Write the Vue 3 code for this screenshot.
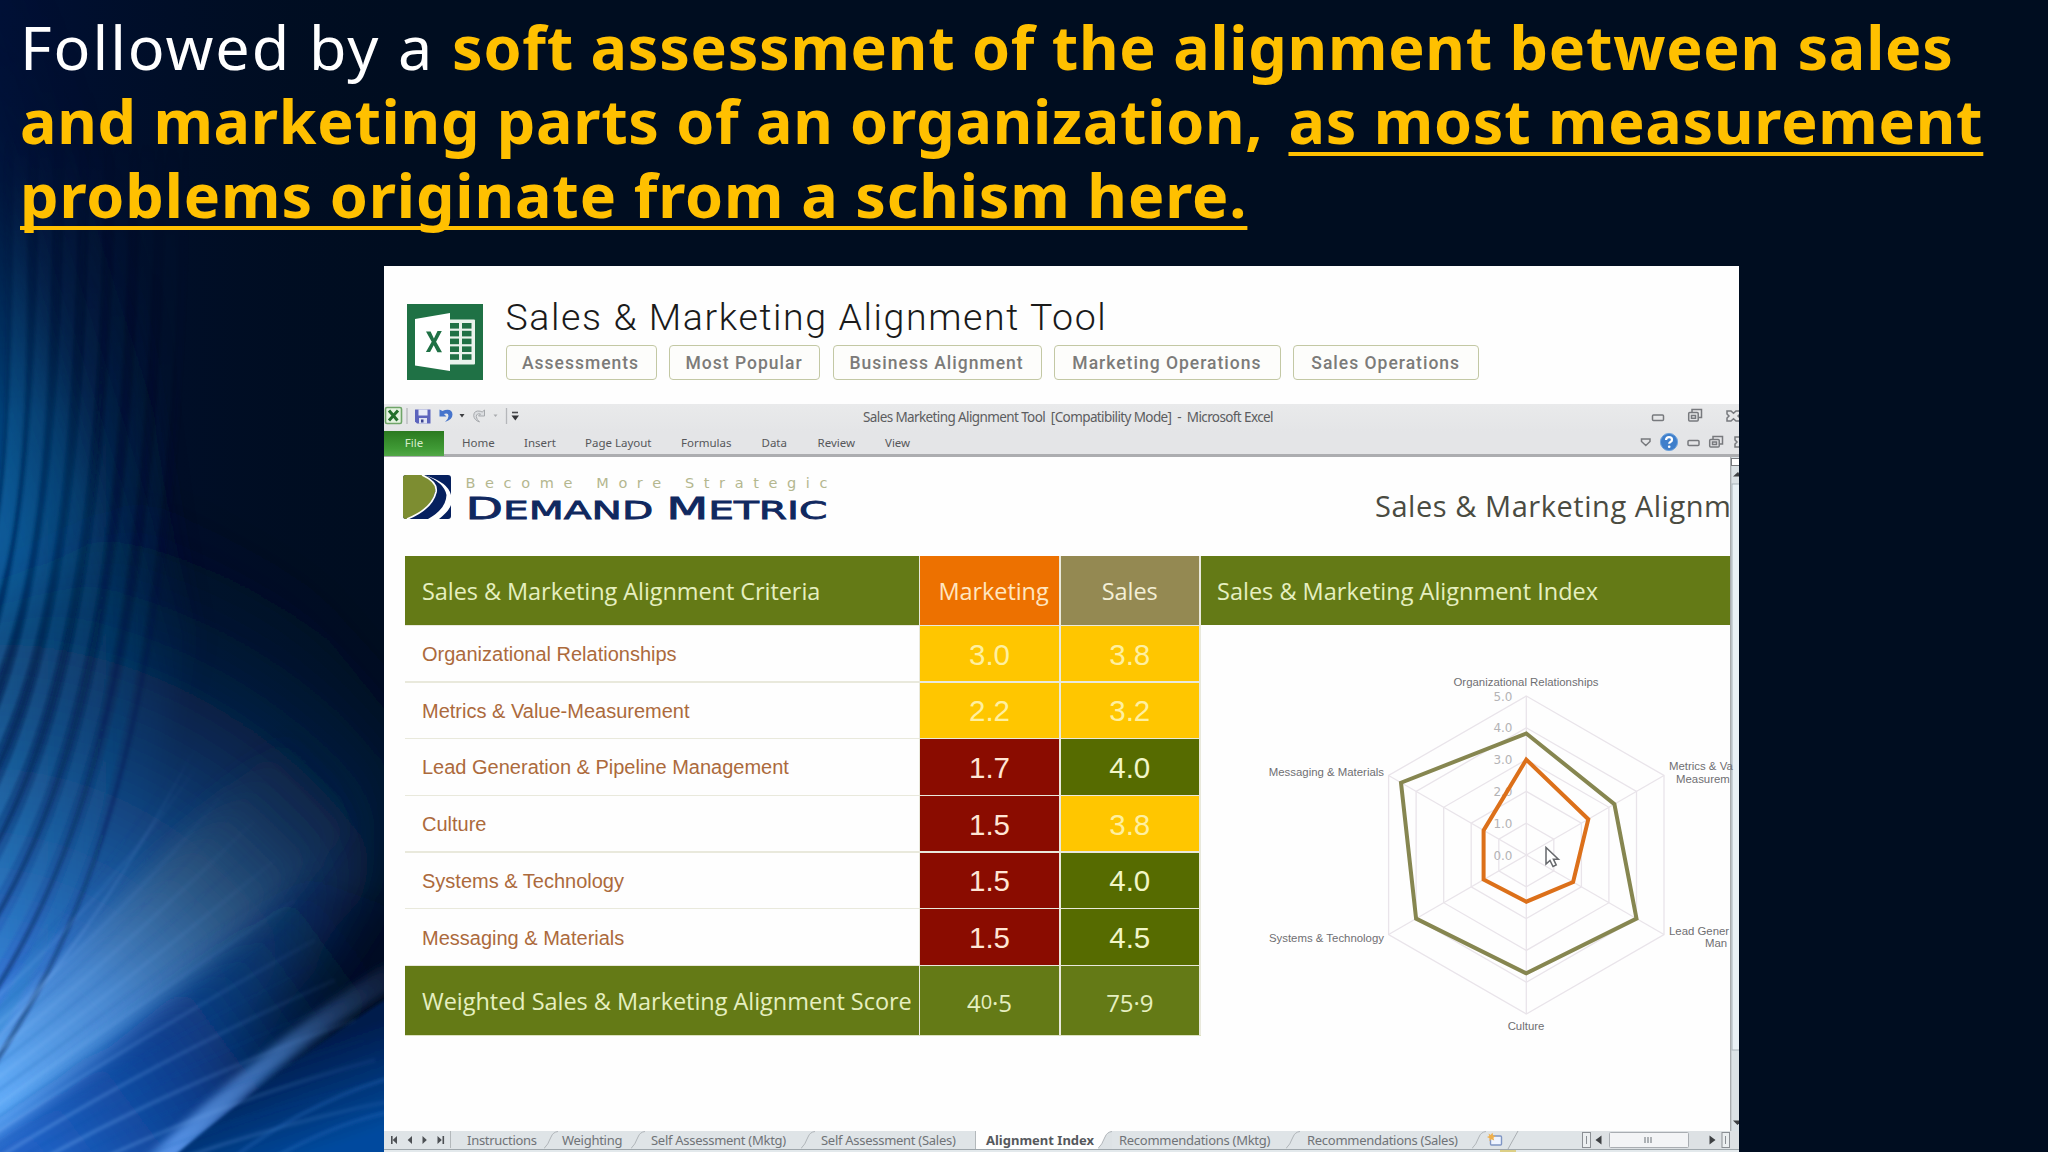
<script setup>
const tags = ['Assessments', 'Most Popular', 'Business Alignment', 'Marketing Operations', 'Sales Operations']
const ribbonTabs = ['Home', 'Insert', 'Page Layout', 'Formulas', 'Data', 'Review', 'View']
const criteria = [
  { name: 'Organizational Relationships', marketing: '3.0', sales: '3.8' },
  { name: 'Metrics & Value-Measurement', marketing: '2.2', sales: '3.2' },
  { name: 'Lead Generation & Pipeline Management', marketing: '1.7', sales: '4.0' },
  { name: 'Culture', marketing: '1.5', sales: '3.8' },
  { name: 'Systems & Technology', marketing: '1.5', sales: '4.0' },
  { name: 'Messaging & Materials', marketing: '1.5', sales: '4.5' },
]
const sheets = [
  { name: 'Instructions' },
  { name: 'Weighting' },
  { name: 'Self Assessment (Mktg)' },
  { name: 'Self Assessment (Sales)', last: true },
  { name: 'Alignment Index', active: true },
  { name: 'Recommendations (Mktg)' },
  { name: 'Recommendations (Sales)' },
]

// Traffic-light class of a score
function level(score) {
  const n = Number(score)
  if (n < 2) return 'low'
  return n < 4 ? 'mid' : 'high'
}

// Radar geometry
const cx = 1526.3
const cy = 855
const unit = 31.8
function ring(values) {
  return values
    .map((v, i) => {
      const a = (Math.PI / 3) * i
      return `${(cx + Math.sin(a) * v * unit).toFixed(1)},${(cy - Math.cos(a) * v * unit).toFixed(1)}`
    })
    .join(' ')
}
const rings = [1, 2, 3, 4, 5].map((v) => ring(Array(6).fill(v)))
const spokes = rings[4].split(' ').map((p) => p.split(','))
const salesShape = ring([3.82, 3.2, 4, 3.72, 4, 4.55])
const marketingShape = ring([3, 2.25, 1.7, 1.47, 1.55, 1.55])
const axis = [5, 4, 3, 2, 1, 0]

// Light streaks: steep arcs on the left edge that flatten into rays lower down
const arcs = Array.from({ length: 15 }, (_, i) => {
  const t = i / 14
  const y0 = 560 + t * 490
  const x1 = 8 + t * 178
  return {
    d: `M-30 ${y0 + 50} C${15 + t * 60} ${y0 - 40 - t * 60} ${x1} ${y0 - 190 - t * 120} ${x1} 120`,
    dark: i % 2 === 0,
    w: i % 2 === 0 ? 5 : 14,
  }
})
const rays = Array.from({ length: 20 }, (_, i) => {
  const y = 1000 + i * 13
  return { d: `M-20 ${y} Q${110 + i * 3} ${y - 120 + i} ${205 + i * 10} ${y - 280 + i * 7}`, dark: i % 2 === 0 }
})
</script>

<template>
  <main class="slide">
    <svg class="backdrop" viewBox="0 0 2048 1152" aria-hidden="true">
      <defs>
        <linearGradient id="edge" gradientUnits="userSpaceOnUse" x1="0" x2="190" y1="500" y2="440">
          <stop offset="0" stop-color="#02508f" />
          <stop offset=".38" stop-color="#013766" />
          <stop offset=".56" stop-color="#011f48" stop-opacity=".8" />
          <stop offset="1" stop-color="#011437" stop-opacity="0" />
        </linearGradient>
        <linearGradient id="edgeFade" x1="0" x2="0" y1="0" y2="1">
          <stop offset="0" stop-color="#111" />
          <stop offset=".16" stop-color="#444" />
          <stop offset=".36" stop-color="#ddd" />
          <stop offset="1" stop-color="#fff" />
        </linearGradient>
        <linearGradient id="arcMaskFade" x1="0" x2="0" y1="0" y2="1">
          <stop offset=".12" stop-color="#000" />
          <stop offset=".42" stop-color="#aaa" />
          <stop offset=".7" stop-color="#fff" />
        </linearGradient>
        <linearGradient id="topTint" x1="0" x2="1" y1="0" y2="0">
          <stop offset="0" stop-color="#001036" />
          <stop offset="1" stop-color="#000d20" stop-opacity="0" />
        </linearGradient>
        <radialGradient id="fan" gradientUnits="userSpaceOnUse" cx="-30" cy="1130" r="660">
          <stop offset="0" stop-color="#4c94f0" />
          <stop offset=".25" stop-color="#3274d0" />
          <stop offset=".44" stop-color="#1a569a" />
          <stop offset=".62" stop-color="#0e376c" stop-opacity=".9" />
          <stop offset=".8" stop-color="#072044" stop-opacity=".6" />
          <stop offset="1" stop-color="#02112a" stop-opacity="0" />
        </radialGradient>
        <linearGradient id="beam" gradientUnits="userSpaceOnUse" x1="0" y1="1100" x2="330" y2="760">
          <stop offset="0" stop-color="#62acf8" />
          <stop offset=".32" stop-color="#4b8ad0" stop-opacity=".9" />
          <stop offset=".62" stop-color="#31587f" stop-opacity=".75" />
          <stop offset="1" stop-color="#16263c" stop-opacity="0" />
        </linearGradient>
        <linearGradient id="floor" gradientUnits="userSpaceOnUse" x1="40" y1="1160" x2="340" y2="940">
          <stop offset="0" stop-color="#2062c6" />
          <stop offset=".45" stop-color="#0a3d8c" stop-opacity=".95" />
          <stop offset="1" stop-color="#04122e" stop-opacity=".2" />
        </linearGradient>
        <linearGradient id="lower" gradientUnits="userSpaceOnUse" x1="180" y1="1150" x2="395" y2="965">
          <stop offset="0" stop-color="#5490e4" />
          <stop offset=".5" stop-color="#3c6cae" stop-opacity=".85" />
          <stop offset="1" stop-color="#1b2c4c" stop-opacity=".4" />
        </linearGradient>
        <linearGradient id="wedge" gradientUnits="userSpaceOnUse" x1="265" y1="1060" x2="300" y2="1160">
          <stop offset="0" stop-color="#011c4c" />
          <stop offset="1" stop-color="#054a9e" />
        </linearGradient>
        <linearGradient id="arcFade" gradientUnits="userSpaceOnUse" x1="0" y1="0" x2="190" y2="0">
          <stop offset="0" stop-color="#2f8fd0" stop-opacity=".38" />
          <stop offset=".5" stop-color="#1a6aa8" stop-opacity=".24" />
          <stop offset="1" stop-color="#0a4878" stop-opacity=".06" />
        </linearGradient>
        <linearGradient id="arcDark" gradientUnits="userSpaceOnUse" x1="0" y1="0" x2="190" y2="0">
          <stop offset="0" stop-color="#01164a" stop-opacity=".45" />
          <stop offset="1" stop-color="#01113c" stop-opacity=".15" />
        </linearGradient>
        <linearGradient id="rayFade" gradientUnits="userSpaceOnUse" x1="0" y1="1080" x2="250" y2="790">
          <stop offset="0" stop-color="#86c0ff" stop-opacity=".5" />
          <stop offset="1" stop-color="#5a88d0" stop-opacity="0" />
        </linearGradient>
        <linearGradient id="rayDark" gradientUnits="userSpaceOnUse" x1="0" y1="1080" x2="250" y2="790">
          <stop offset="0" stop-color="#124aa8" stop-opacity=".3" />
          <stop offset="1" stop-color="#0a3474" stop-opacity="0" />
        </linearGradient>
        <mask id="edgeMask" maskUnits="userSpaceOnUse" x="0" y="0" width="460" height="1152"><rect width="460" height="1152" fill="url(#edgeFade)" /></mask>
        <mask id="arcMask" maskUnits="userSpaceOnUse" x="0" y="0" width="460" height="1152"><rect width="460" height="1152" fill="url(#arcMaskFade)" /></mask>
        <filter id="soft1" x="-20%" y="-20%" width="140%" height="140%"><feGaussianBlur stdDeviation="1.8" /></filter>
        <filter id="soft5" x="-30%" y="-30%" width="160%" height="160%"><feGaussianBlur stdDeviation="4" /></filter>
        <filter id="soft12" x="-30%" y="-30%" width="160%" height="160%"><feGaussianBlur stdDeviation="13" /></filter>
        <filter id="soft25" x="-40%" y="-40%" width="180%" height="180%"><feGaussianBlur stdDeviation="28" /></filter>
      </defs>
      <rect width="420" height="1152" fill="url(#topTint)" />
      <g mask="url(#edgeMask)">
        <path d="M-60 -40H130Q140 430 190 640L120 900L-60 1080Z" fill="url(#edge)" filter="url(#soft12)" />
      </g>
      <path d="M-80 640Q40 600 140 500L300 600L420 760L360 900L200 1080L-80 1220Z" fill="url(#fan)" filter="url(#soft25)" />
      <path d="M-40 1160V1060Q150 870 320 700L350 830Q200 990 -10 1150Z" fill="url(#beam)" filter="url(#soft12)" />
      <path d="M-50 1190L-20 1150Q160 1010 310 880L420 920L320 1080L200 1190Z" fill="url(#floor)" filter="url(#soft12)" />
      <path d="M130 1175Q260 1045 400 955V985Q280 1050 165 1175Z" fill="url(#lower)" filter="url(#soft5)" />
      <path d="M174 1156Q290 1060 400 990V1160H174Z" fill="url(#wedge)" filter="url(#soft1)" />
      <g mask="url(#arcMask)">
        <g fill="none" filter="url(#soft1)">
          <path v-for="(a, i) in arcs" :key="i" :d="a.d" :stroke="a.dark ? 'url(#arcDark)' : 'url(#arcFade)'" :stroke-width="a.w" />
        </g>
      </g>
      <g fill="none" stroke-width="4" filter="url(#soft1)">
        <path v-for="(r, i) in rays" :key="i" :d="r.d" :stroke="r.dark ? 'url(#rayDark)' : 'url(#rayFade)'" opacity=".5" />
        <path d="M-10 1047Q110 920 225 690" stroke="url(#rayFade)" stroke-width="2.5" />
        <path d="M230 1160Q310 1100 400 1075M270 1160Q340 1120 400 1110" stroke="#2f78cc" opacity=".25" />
      </g>
    </svg>

    <h1 class="headline">
      <span class="line"><span class="plain">Followed by a </span><b>soft assessment of the alignment between sales</b></span>
      <span class="line"><b class="snug">and marketing parts of an organization, </b><b class="under second">as most measurement</b></span>
      <span class="line"><b class="under loose">problems originate from a schism here.</b></span>
    </h1>

    <section class="panel">
      <header class="tool-head">
        <svg class="tool-icon" viewBox="0 0 76 76">
          <rect width="76" height="76" fill="#1f7145" />
          <rect x="42" y="15.500" width="26" height="45" rx="1" fill="#e9f3ec" />
          <g fill="#1f7145">
            <g v-for="n in 5" :key="n">
              <rect x="43" :y="19 + (n - 1) * 7.8" width="9" height="5.600" />
              <rect x="55" :y="19 + (n - 1) * 7.8" width="9.500" height="5.600" />
            </g>
          </g>
          <path d="M8 15L43 9V67L8 61.500Z" fill="#fff" />
          <path d="M19 27.500h4.600l3.300 7 3.600-7.500h4.300l-5.700 10.700 5.900 10.500h-4.600l-3.700-7-3.600 6.700h-4.200l5.800-10.100z" fill="#1f7145" />
        </svg>
        <div class="tool-text">
          <h2>Sales &amp; Marketing Alignment Tool</h2>
          <div class="tags">
            <span v-for="t in tags" :key="t" class="tag">{{ t }}</span>
          </div>
        </div>
      </header>

      <div class="titlebar">
        <svg class="qat" viewBox="384 404 479 27">
          <rect x="385.500" y="407.500" width="16" height="16" rx="1.500" fill="#e4f3e0" stroke="#6fa568" stroke-width="1.600" />
          <path d="M389 410.500l8.500 10M398 410.500l-9 10" stroke="#24702c" stroke-width="3" />
          <path d="M407 408v16M506.500 408v16" stroke="#b5b7ba" stroke-width="1.300" />
          <path d="M415 409.500h15.500v14H417l-2-2z" fill="#5c64bd" />
          <rect x="418.500" y="409.500" width="9" height="6" fill="#e7ebf8" />
          <rect x="419" y="418" width="8" height="5.500" fill="#dfe3f2" /><rect x="421" y="419.500" width="2.500" height="3" fill="#3b4290" />
          <path d="M439.500 409.500v7h7l-2.600-2.500q4.500-1.500 4.600 2 0 3-3.500 6 7.500-2.500 7.500-7.500-.3-6-7.500-4.500l-2.500 1z" fill="#4674cc" />
          <path d="M459.500 414h5l-2.500 3.500z" fill="#3e3f42" />
          <path d="M484.500 410v6h-6l2-2q-4-1-4.200 2.500.2 3 3.200 5.500-5.500-2-5.800-6.500.3-5.500 6.500-4.300l2 .8z" fill="#dcdee1" stroke="#a5a8ac" />
          <path d="M493.500 414.500h4l-2 2.500z" fill="#a9abae" />
          <path d="M512 412.500h6" stroke="#4a4b4e" stroke-width="1.600" /><path d="M511.500 415.500h7.500l-3.700 5z" fill="#343538" />
        </svg>
        <span class="title">Sales Marketing Alignment Tool&nbsp; [Compatibility Mode]&nbsp; -&nbsp; Microsoft Excel</span>
        <svg class="win" viewBox="1640 404 99 27" fill="none" stroke="#77797d" stroke-width="1.500">
          <rect x="1652.500" y="415" width="11" height="5.500" rx="1" />
          <path d="M1692 412.500v-3h9.500v8h-3" /><rect x="1688.700" y="412.500" width="9.500" height="8.500" rx="1" /><rect x="1691.500" y="415.500" width="4" height="2.800" />
          <path d="M1727 411h4l2.500 2.300 2.500-2.300h4v3l-2 2 2 2v3h-4l-2.500-2.300-2.500 2.300h-4v-3l2-2-2-2z" />
        </svg>
      </div>

      <nav class="ribbon">
        <span class="file">File</span>
        <div class="ribbon-tabs">
          <span v-for="t in ribbonTabs" :key="t">{{ t }}</span>
        </div>
        <svg class="win" viewBox="1640 431 99 23" fill="none" stroke="#77797d" stroke-width="1.500">
          <path d="M1641.500 439h8.500v2.500l-4.200 4-4.300-4z" />
          <circle cx="1669" cy="442" r="8.600" fill="#3f7fcb" stroke="#6ea3dd" stroke-width="1" />
          <path d="M1666 440q.2-2.800 3-2.800 3 0 3 2.500 0 1.500-1.600 2.300-1.200.6-1.200 1.800" stroke="#fff" stroke-width="2.200" /><circle cx="1669.200" cy="446.800" r="1.300" fill="#fff" stroke="none" />
          <rect x="1688" y="440.500" width="11" height="5" rx="1" />
          <path d="M1713 439v-2.500h9.500v7.500h-3" /><rect x="1709.700" y="439.500" width="9.500" height="7.500" rx="1" /><rect x="1712.500" y="442" width="4" height="2.500" />
          <path d="M1742 437h-7v3l2 2-2 2v3h7" />
        </svg>
      </nav>

      <div class="work">
        <div class="sheet">
          <div class="brand">
            <svg class="logo" viewBox="0 0 48 44">
              <rect width="48" height="44" rx="3" fill="#06205e" />
              <path d="M3 0H21Q34 6 32 17Q28 34 5 44H3Q0 44 0 41V3Q0 0 3 0Z" fill="#7d8d31" />
              <path d="M19 0Q35 7 33 17Q29 34 4 44" fill="none" stroke="#fff" stroke-width="1.700" />
              <path d="M21 0Q41 7 43.500 20Q43 34 25 44H36Q46 36 48 30V20Q45 7 21 0Z" fill="#fff" />
            </svg>
            <svg class="wordmark" viewBox="465 470 364 54">
              <text x="465.500" y="487.700" class="tagline" textLength="362">Become More Strategic</text>
              <text x="465.500" y="519.200" class="name" textLength="362" lengthAdjust="spacingAndGlyphs"><tspan class="cap">D</tspan>EMAND <tspan class="cap">M</tspan>ETRIC</text>
            </svg>
            <span class="sheet-title">Sales &amp; Marketing Alignm</span>
          </div>

          <div class="body">
            <div class="table">
              <div class="cell head wide">Sales &amp; Marketing Alignment Criteria</div>
              <div class="cell head orange">Marketing</div>
              <div class="cell head tan">Sales</div>
              <template v-for="c in criteria" :key="c.name">
                <div class="cell name-cell">{{ c.name }}</div>
                <div class="cell score" :class="level(c.marketing)">{{ c.marketing }}</div>
                <div class="cell score" :class="level(c.sales)">{{ c.sales }}</div>
              </template>
              <div class="cell head wide total">Weighted Sales &amp; Marketing Alignment Score</div>
              <div class="cell head mark"><span class="low-fig">4</span><span class="small-fig">0</span><span class="dot">.</span><span class="low-fig">5</span></div>
              <div class="cell head mark"><span class="low-fig">75</span><span class="dot">.</span><span class="low-fig">9</span></div>
            </div>

            <div class="index">
              <div class="cell head index-head">Sales &amp; Marketing Alignment Index</div>
              <svg class="radar" viewBox="1201 626 538 505">
                <g fill="none" stroke="#e9e4ea" stroke-width="1.300">
                  <polygon v-for="r in rings" :key="r" :points="r" />
                  <line v-for="s in spokes" :key="s[0] + s[1]" :x1="cx" :y1="cy" :x2="s[0]" :y2="s[1]" />
                </g>
                <g class="axis">
                  <text v-for="a in axis" :key="a" x="1512.500" :y="cy - a * unit + 4.600" text-anchor="end">{{ a }}.0</text>
                </g>
                <polygon :points="salesShape" fill="none" stroke="#868650" stroke-width="4" />
                <polygon :points="marketingShape" fill="none" stroke="#dc701a" stroke-width="4" />
                <g class="labels">
                  <text x="1526" y="686" text-anchor="middle">Organizational Relationships</text>
                  <text x="1384" y="776" text-anchor="end">Messaging &amp; Materials</text>
                  <text x="1384" y="942" text-anchor="end">Systems &amp; Technology</text>
                  <text x="1526" y="1030" text-anchor="middle">Culture</text>
                  <text x="1669" y="770">Metrics &amp; Va</text>
                  <text x="1676" y="783">Measurem</text>
                  <text x="1669" y="934.500">Lead Gener</text>
                  <text x="1705" y="947">Man</text>
                </g>
                <path d="M1546 847.500v16.500l4-3.500 3 6 3.200-1.500-2.800-5.800h5z" fill="#fff" stroke="#66686c" stroke-width="1.500" />
              </svg>
            </div>
          </div>
        </div>

        <svg class="vscroll" viewBox="0 457 9 674">
          <rect y="457" width="9" height="674" fill="#dbe2e6" />
          <path d="M.7 457v674" stroke="#a5a9ad" stroke-width="1.300" />
          <rect x="1.500" y="458.500" width="12" height="7" fill="#fff" stroke="#77797d" />
          <path d="M3 476.500l5-4.500 4 4.500z" fill="#3e4043" />
          <rect x="2" y="484" width="12" height="566" fill="#e9f1f6" stroke="#a9b3b9" />
          <path d="M3 1120.500h9l-4.500 4.500z" fill="#3e4043" />
        </svg>
      </div>

      <footer class="sheetbar">
        <svg class="nav" viewBox="384 1131 67 18" fill="#4c4f53">
          <path d="M391 1136h1.600v8H391zM397 1136v8l-4.300-4z" />
          <path d="M412 1136v8l-4.300-4z" /><path d="M422.500 1136v8l4.300-4z" />
          <path d="M437.500 1136v8l4.300-4zM442.500 1136h1.600v8h-1.600z" />
          <path d="M450 1131h1v17h-1z" fill="#b3b8bb" />
        </svg>
        <div class="sheet-tabs">
          <span v-for="s in sheets" :key="s.name" class="sheet-tab" :class="{ active: s.active, last: s.last }">
            {{ s.name }}
            <svg v-if="!s.last" class="slant" viewBox="0 0 14 18">
              <path v-if="s.active" d="M14 0Q9 1 7 6Q4 14 0 18H14Z" fill="#dde2e5" />
              <path d="M14 0.500Q9 1 7 6Q4 14 0 17.500" fill="none" stroke="#b0b5b9" />
            </svg>
          </span>
        </div>
        <svg class="new-sheet" viewBox="1486 1131 96 18">
          <path d="M1518 1131L1508 1149" stroke="#a9aeb2" />
          <rect x="1490.500" y="1136" width="11" height="9" rx="1" fill="#eef4ff" stroke="#7f95c4" stroke-width="1.400" />
          <path d="M1488.500 1133.500l2 1.500 2-2.300.6 2.800 2.600.5-2.300 1.800.8 2.800-2.800-1.400-2 2 .2-3-2.700-1.200 2.400-1z" fill="#efb04c" />
        </svg>
        <svg class="hscroll" viewBox="1582 1131 157 18">
          <rect x="1582" y="1131" width="157" height="18" fill="#dde1e4" />
          <rect x="1582.500" y="1132.500" width="8" height="15" fill="#eceff1" stroke="#8b8f94" /><path d="M1586.500 1136v8" stroke="#8b8f94" />
          <path d="M1601.500 1135.500v9l-6-4.500z" fill="#3e4043" />
          <rect x="1609.500" y="1132.500" width="79" height="15" rx="1" fill="#f3f4f6" stroke="#a9adb2" />
          <path d="M1645 1137v6M1648 1137v6M1651 1137v6" stroke="#989ca1" stroke-width="1.500" />
          <path d="M1709.500 1135.500v9l6-4.500z" fill="#3e4043" />
          <rect x="1722" y="1132.500" width="7.500" height="15" fill="#eceff1" stroke="#8b8f94" /><path d="M1725.500 1136v8" stroke="#8b8f94" />
        </svg>
      </footer>
      <div class="statusbar"><i class="spot"></i></div>
    </section>
  </main>
</template>

<style>
body {
  margin: 0;
  background: #000d20;
}
</style>

<style scoped>
.slide {
  position: relative;
  width: 2048px;
  height: 1152px;
  overflow: hidden;
  background: #000d20;
  box-sizing: border-box;
}
.backdrop {
  position: absolute;
  inset: 0;
  width: 2048px;
  height: 1152px;
}
.headline {
  position: relative;
  box-sizing: border-box;
  height: 266px;
  margin: 0;
  padding: 10px 0 0 20px;
  font: 400 61px/73.8px "Noto Sans", sans-serif;
  color: #fff;
  white-space: pre;
}
.line {
  display: block;
}
.plain {
  letter-spacing: 1.950px;
}
.headline b {
  color: #ffc000;
  font-weight: 700;
  letter-spacing: 0.740px;
}
.headline .snug {
  letter-spacing: 0.700px;
}
.headline .loose {
  letter-spacing: 0.870px;
}
.headline .second {
  margin-left: 8.500px;
}
.under {
  text-decoration: underline;
  text-decoration-thickness: 4px;
  text-underline-offset: 7.500px;
  text-decoration-skip-ink: none;
}
.panel {
  position: relative;
  display: flex;
  flex-direction: column;
  width: 1355px;
  height: 886px;
  margin-left: 384px;
  overflow: hidden;
  background: #fefefe;
}
.tool-head {
  display: flex;
  flex: none;
  box-sizing: border-box;
  height: 138px;
  padding: 38px 0 0 23px;
  gap: 22.5px;
}
.tool-icon {
  flex: none;
  width: 76px;
  height: 76px;
}
.tool-text h2 {
  margin: 0 0 14px;
  font: 300 37.5px/27px Roboto, sans-serif;
  letter-spacing: 1.6px;
  color: #1a1a1a;
  white-space: nowrap;
}
.tags {
  display: grid;
  grid-template-columns: 151px 151.500px 209px 227px 186px;
  gap: 12.300px;
}
.tag {
  box-sizing: border-box;
  height: 35px;
  padding-right: 1px;
  border: 1.500px solid #c3c8a4;
  border-radius: 4px;
  background: #fdfdfb;
  color: #7c7b79;
  font: 500 17.500px/34px Roboto, sans-serif;
  letter-spacing: 1px;
  text-align: center;
  white-space: nowrap;
}
.titlebar {
  display: flex;
  flex: none;
  height: 27px;
  background: linear-gradient(#e9eaeb, #e4e5e7);
}
.qat {
  flex: none;
  width: 479px;
  height: 27px;
}
.title {
  font: 13.500px/26px "Noto Sans", sans-serif;
  letter-spacing: -0.610px;
  color: #5c5d60;
  white-space: nowrap;
}
.win {
  flex: none;
  width: 99px;
  margin-left: auto;
}
.ribbon {
  display: flex;
  flex: none;
  box-sizing: border-box;
  height: 26px;
  border-bottom: 3px solid #acadb0;
  background: #e4e5e7;
  font: 11.500px/23px "Noto Sans", sans-serif;
  color: #56575a;
}
.file {
  width: 60px;
  height: 25px;
  background: linear-gradient(#2b7a20, #3f9a35 70%, #52a847);
  color: #d5ecc9;
  text-align: center;
}
.ribbon-tabs {
  display: grid;
  grid-template-columns: 62px 61px 96px 80.500px 56px 67.500px 60px;
  padding-left: 18px;
}
.work {
  display: flex;
  flex: none;
  height: 674px;
}
.sheet {
  width: 1346px;
}
.brand {
  display: flex;
  box-sizing: border-box;
  height: 99px;
  padding: 18px 0 0 19px;
  overflow: hidden;
}
.logo {
  flex: none;
  width: 48px;
  height: 44px;
}
.wordmark {
  flex: none;
  width: 364px;
  height: 54px;
  margin: -5px 0 0 14px;
}
.tagline {
  font: 14.500px "DejaVu Sans", sans-serif;
  fill: #b4b78f;
}
.name {
  font: 25px "DejaVu Sans", sans-serif;
  fill: #10285f;
  stroke: #10285f;
  stroke-width: 0.800px;
}
.cap {
  font-size: 30px;
}
.sheet-title {
  margin: 10.500px 0 0 546px;
  font: 29px/40px "Open Sans", sans-serif;
  letter-spacing: 0.550px;
  color: #4a4b41;
  white-space: nowrap;
}
.body {
  display: flex;
  padding-left: 21px;
}
.table {
  display: grid;
  flex: none;
  align-self: flex-start;
  grid-template-columns: 513.500px 139px 138.500px;
  grid-template-rows: 68.500px repeat(6, 55.200px) 68.500px;
  gap: 1.500px;
  padding-right: 1.500px;
  border-bottom: 1.500px solid #dde2c0;
  background: #e9e9dc;
}
.cell {
  display: flex;
  align-items: center;
  box-sizing: border-box;
  padding-top: 2px;
  white-space: nowrap;
}
.head {
  justify-content: center;
  background: #647a16;
  color: #e6efc0;
  font: 23.500px "Open Sans", sans-serif;
  letter-spacing: -0.070px;
}
.wide {
  justify-content: flex-start;
  padding-left: 17px;
}
.total {
  letter-spacing: -0.040px;
}
.orange {
  background: #ed7100;
  color: #ffe6c0;
  padding-left: 8px;
}
.tan {
  background: #948952;
  color: #f3efd6;
}
.name-cell {
  padding-left: 17px;
  background: #fefefe;
  color: #ac6a3c;
  font: 20px "Liberation Sans", sans-serif;
}
.score {
  justify-content: center;
  font: 29.500px "Liberation Sans", sans-serif;
}
.mid {
  background: #ffc600;
  color: #fff0a0;
}
.low {
  background: #8a0c00;
  color: #ffe5d4;
}
.high {
  background: #566b00;
  color: #f2f6c8;
}
.mark {
  align-items: baseline;
  padding-top: 17px;
  font-size: 24px;
  line-height: 34px;
}
.small-fig {
  font-size: 20px;
}
.dot {
  transform: translateY(-4px);
}
.low-fig {
  transform: translateY(3px);
}
.index {
  width: 529px;
}
.index-head {
  height: 68.500px;
  justify-content: flex-start;
  padding-left: 16.500px;
  letter-spacing: 0;
}
.radar {
  position: relative;
  z-index: 1;
  display: block;
  width: 538px;
  height: 505px;
  margin-top: 1.500px;
}
.axis {
  font: 12px "DejaVu Sans", sans-serif;
  fill: #b4b3b5;
}
.labels {
  font: 11.400px "Liberation Sans", sans-serif;
  fill: #6f6e72;
}
.vscroll {
  flex: none;
  width: 9px;
  height: 674px;
}
.sheetbar {
  display: flex;
  flex: none;
  box-sizing: border-box;
  height: 18px;
  background: #dfe4e7;
}
.nav {
  flex: none;
  width: 67px;
  height: 18px;
}
.sheet-tabs {
  display: grid;
  flex: none;
  grid-template-columns: 107px 87px 170px 161px 136px 188px 186px;
  font: 13px/18px "Noto Sans", sans-serif;
  letter-spacing: -0.280px;
  color: #707377;
}
.sheet-tab {
  display: flex;
  padding-left: 6px;
  white-space: nowrap;
}
.sheet-tab:first-child {
  padding-left: 16px;
}
.sheet-tab:nth-child(2) {
  padding-left: 4px;
}
.last {
  border-right: 1px solid #b3b8bb;
}
.sheet-tab:nth-child(n + 6) {
  padding-left: 7px;
}
.sheet-tab.active {
  padding-left: 10px;
  background: #fefefe;
  color: #55585c;
  font-weight: 700;
  letter-spacing: 0;
}
.slant {
  flex: none;
  width: 14px;
  height: 18px;
  margin-left: auto;
}
.new-sheet {
  flex: none;
  width: 96px;
  height: 18px;
}
.hscroll {
  flex: none;
  width: 157px;
  height: 18px;
}
.statusbar {
  flex: none;
  box-sizing: border-box;
  height: 3px;
  border-top: 1px solid #9ea6ab;
  background: #e3e9ec;
}
.spot {
  display: block;
  width: 16px;
  height: 2px;
  margin-left: 1116px;
  background: #dccf86;
}
</style>
